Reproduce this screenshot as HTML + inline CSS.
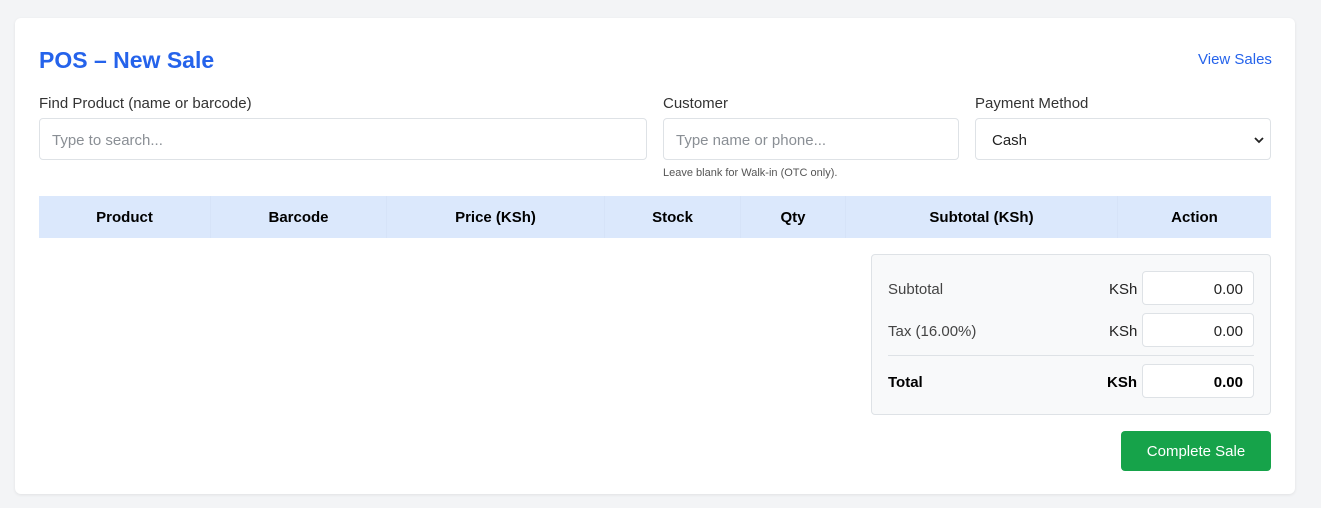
<!DOCTYPE html>
<html><head><style>
*{box-sizing:border-box;margin:0;padding:0}
body{width:1321px;height:508px;background:#f3f4f6;font-family:"Liberation Sans",sans-serif;position:relative;overflow:hidden}
.card{position:absolute;left:15px;top:18px;width:1280px;height:476px;background:#fff;border-radius:6px;box-shadow:0 1px 3px rgba(0,0,0,.08)}
.a{position:absolute}
h1{position:absolute;left:39px;top:47px;font-size:23px;color:#2563eb;font-weight:bold}
.lbl{position:absolute;font-size:15px;color:#333}
.inp{position:absolute;height:42px;border:1px solid #dee2e6;border-radius:4px;background:#fff;font-size:15px;color:#8a8f95;padding:13px 12px}
.th{position:absolute;top:196px;height:42px;line-height:44px;text-align:center;font-weight:bold;font-size:15px;color:#000;border-right:1px solid #d6e3f8}
.box{position:absolute;left:871px;top:254px;width:400px;height:161px;background:#f8f9fa;border:1px solid #dee2e6;border-radius:4px}
.val{position:absolute;left:270px;width:112px;height:34px;background:#fff;border:1px solid #dee2e6;border-radius:4px;text-align:right;padding:9px 10px;font-size:15px;color:#222}
</style></head><body>
<div class="card"></div>
<h1>POS – New Sale</h1>
<div class="a" style="left:1198px;top:51px;font-size:15px;color:#2563eb">View Sales</div>
<div class="lbl" style="left:39px;top:95px">Find Product (name or barcode)</div>
<div class="lbl" style="left:663px;top:95px">Customer</div>
<div class="lbl" style="left:975px;top:95px">Payment Method</div>
<div class="inp" style="left:39px;top:118px;width:608px">Type to search...</div>
<div class="inp" style="left:663px;top:118px;width:296px">Type name or phone...</div>
<div class="inp" style="left:975px;top:118px;width:296px;color:#222;padding-left:16px">Cash<svg style="position:absolute;right:6px;top:17px" width="10" height="8" viewBox="0 0 10 8"><path d="M1 2l4 4 4-4" fill="none" stroke="#222" stroke-width="1.8"/></svg></div>
<div class="a" style="left:663px;top:167px;font-size:11px;color:#555">Leave blank for Walk-in (OTC only).</div>
<div class="a" style="left:39px;top:196px;width:1232px;height:42px;background:#dbe8fc"></div>
<div class="th" style="left:39px;width:172px">Product</div>
<div class="th" style="left:211px;width:176px">Barcode</div>
<div class="th" style="left:387px;width:218px">Price (KSh)</div>
<div class="th" style="left:605px;width:136px">Stock</div>
<div class="th" style="left:741px;width:105px">Qty</div>
<div class="th" style="left:846px;width:272px">Subtotal (KSh)</div>
<div class="th" style="left:1118px;width:153px;border:none">Action</div>
<div class="box">
 <div class="a" style="left:16px;top:26px;font-size:15px;color:#444">Subtotal</div>
 <div class="a" style="left:237px;top:26px;font-size:15px;color:#222">KSh</div>
 <div class="val" style="top:16px">0.00</div>
 <div class="a" style="left:16px;top:68px;font-size:15px;color:#444">Tax (16.00%)</div>
 <div class="a" style="left:237px;top:68px;font-size:15px;color:#222">KSh</div>
 <div class="val" style="top:58px">0.00</div>
 <div class="a" style="left:16px;top:100px;width:366px;border-top:1px solid #dee2e6"></div>
 <div class="a" style="left:16px;top:119px;font-size:15px;font-weight:bold;color:#000">Total</div>
 <div class="a" style="left:235px;top:119px;font-size:15px;font-weight:bold;color:#000">KSh</div>
 <div class="val" style="top:109px;font-weight:bold;color:#000">0.00</div>
</div>
<div class="a" style="left:1121px;top:431px;width:150px;height:40px;background:#16a34a;border-radius:4px;color:#fff;font-size:15px;text-align:center;line-height:42px">Complete Sale</div>
</body></html>
